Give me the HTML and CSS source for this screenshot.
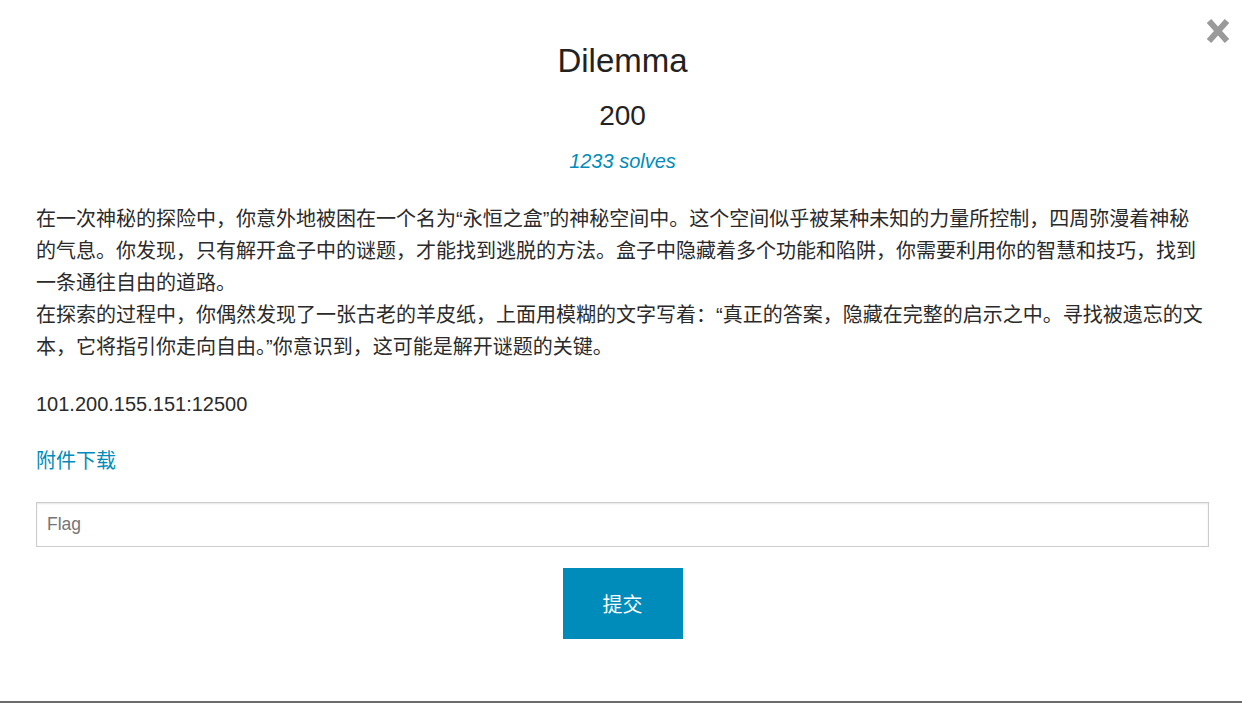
FILE: index.html
```html
<!DOCTYPE html>
<html lang="zh">
<head>
<meta charset="utf-8">
<title>Dilemma</title>
<link rel="stylesheet" href="styles.css">
</head>
<body>
<div class="modal">
  <button class="close" aria-label="Close">
    <svg width="24" height="26" viewBox="0 0 24 26"><path d="M3 3 L21 23 M21 3 L3 23" stroke="#9a9a9a" stroke-width="6" fill="none"/></svg>
  </button>
  <div class="content">
    <h2 class="name">Dilemma</h2>
    <h3 class="value">200</h3>
    <p class="solves">1233 solves</p>
    <div class="desc">
      <p>在一次神秘的探险中，你意外地被困在一个名为“永恒之盒”的神秘空间中。这个空间似乎被某种未知的力量所控制，四周弥漫着神秘的气息。你发现，只有解开盒子中的谜题，才能找到逃脱的方法。盒子中隐藏着多个功能和陷阱，你需要利用你的智慧和技巧，找到一条通往自由的道路。<br>在探索的过程中，你偶然发现了一张古老的羊皮纸，上面用模糊的文字写着：“真正的答案，隐藏在完整的启示之中。寻找被遗忘的文本，它将指引你走向自由。”你意识到，这可能是解开谜题的关键。</p>
      <p>101.200.155.151:12500</p>
      <p><a class="link" href="#">附件下载</a></p>
    </div>
    <form class="flag-form">
      <input class="flag-input" type="text" placeholder="Flag">
      <div class="actions"><button class="submit" type="button">提交</button></div>
    </form>
  </div>
</div>
</body>
</html>
```
FILE: styles.css
```css
html, body {
  margin: 0;
  padding: 0;
}
body {
  background: #6b6b6b;
  font-family: "Liberation Sans", Arial, "Noto Sans CJK SC", sans-serif;
  color: #222;
  overflow: hidden;
}
.modal {
  position: relative;
  background: #fff;
  height: 701px;
  box-sizing: border-box;
}
.close {
  position: absolute;
  left: 1206px;
  top: 18px;
  padding: 0;
  margin: 0;
  border: 0;
  background: none;
  width: 24px;
  height: 26px;
  display: block;
}
.close svg { display: block; }
.content {
  padding: 41px 33px 0 36px;
}
.name {
  margin: 0;
  text-align: center;
  font-size: 33px;
  line-height: 40px;
  font-weight: normal;
  color: #222;
}
.value {
  margin: 17px 0 0;
  text-align: center;
  font-size: 28px;
  line-height: 36px;
  font-weight: normal;
  color: #222;
}
.solves {
  margin: 15px 0 0;
  text-align: center;
  font-size: 20px;
  line-height: 24px;
  font-style: italic;
  color: #008cba;
}
.desc {
  margin-top: 30px;
  padding-right: 3px;
  font-size: 20px;
  color: #2a2a2a;
}
.desc p {
  margin: 0 0 25px;
  line-height: 32px;
}
.link {
  color: #008cba;
  text-decoration: none;
}
.flag-form {
  margin: 0;
}
.flag-input {
  display: block;
  width: 100%;
  box-sizing: border-box;
  height: 45px;
  margin: 0;
  padding: 0 10px;
  border: 1px solid #ccc;
  border-radius: 0;
  box-shadow: inset 0 1px 2px rgba(0,0,0,0.1);
  font-family: "Liberation Sans", Arial, sans-serif;
  font-size: 17.5px;
  color: #333;
  outline: none;
}
.flag-input::placeholder {
  color: #757575;
}
.actions {
  display: flex;
  justify-content: center;
  margin-top: 21px;
}
.submit {
  width: 120px;
  height: 71px;
  border: 0;
  border-radius: 0;
  background: #008cba;
  color: #fff;
  font-family: "Liberation Sans", Arial, "Noto Sans CJK SC", sans-serif;
  font-size: 20px;
  padding: 0;
  margin: 0;
}
```
